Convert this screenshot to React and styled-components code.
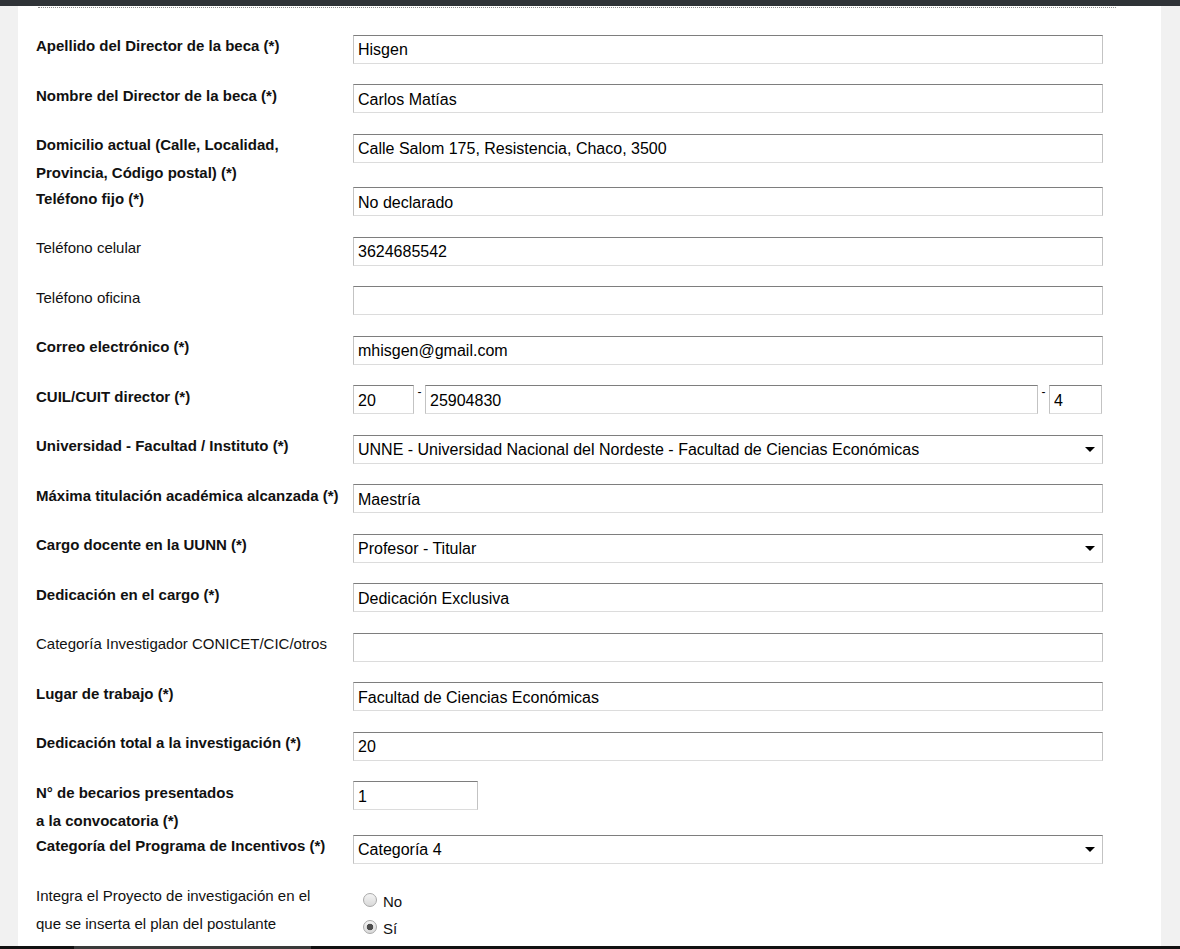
import styled, { createGlobalStyle } from "styled-components";

const GlobalStyle = createGlobalStyle`
  html, body {
    margin: 0;
    padding: 0;
    height: 100%;
  }
  body {
    background: #f1f1f1;
    font-family: "Liberation Sans", Arial, sans-serif;
    color: #111;
    overflow: hidden;
  }
  #root {
    height: 100%;
  }
`;

const Page = styled.div`
  display: flex;
  flex-direction: column;
  height: 949px;
`;

const TopBar = styled.div`
  height: 6px;
  flex-shrink: 0;
  background: #2f3337;
`;

const Main = styled.div`
  flex: 1;
  min-height: 0;
  display: flex;
  padding: 0 19px 0 18px;
`;

const Panel = styled.div`
  flex: 1;
  background: #fff;
  padding: 1px 0 0 18px;
  overflow: hidden;
`;

const Divider = styled.div`
  border-top: 1px dotted #8c8c8c;
  margin: 0 45px 0 2px;
`;

const Form = styled.div`
  margin-top: 24px;
`;

const Row = styled.div`
  display: flex;
  align-items: flex-start;
`;

const Label = styled.div`
  width: 317px;
  flex-shrink: 0;
  font-size: 15px;
  line-height: 28px;
  font-weight: ${(p) => (p.$bold ? 700 : 400)};
  color: #111;
  white-space: nowrap;
  margin-bottom: -2.5px;
`;

const Field = styled.div`
  width: 750px;
  display: flex;
  align-items: flex-start;
  padding: 2.5px 0 18px;
`;

const TextInput = styled.input`
  box-sizing: border-box;
  width: ${(p) => p.$width || 750}px;
  height: 29px;
  margin: 0;
  padding: 2px 4px 0;
  border: 1px solid #c3c3c3;
  border-top-color: #7e7e7e;
  border-bottom-color: #dcdcdc;
  border-radius: 0;
  background: #fff;
  font-family: "Liberation Sans", Arial, sans-serif;
  font-size: 16px;
  color: #000;
  outline: none;
`;

const Dash = styled.span`
  width: 11px;
  text-align: center;
  font-size: 12px;
  line-height: 14px;
  color: #000;
`;

const SelectBox = styled.div`
  box-sizing: border-box;
  width: 750px;
  height: 29px;
  display: flex;
  align-items: center;
  justify-content: space-between;
  padding: 2px 7px 0 4px;
  border: 1px solid #c3c3c3;
  border-top-color: #7e7e7e;
  border-bottom-color: #dcdcdc;
  background: #fff;
  font-size: 16px;
  color: #000;
`;

const Arrow = styled.span`
  width: 0;
  height: 0;
  margin-top: -2px;
  border-left: 5px solid transparent;
  border-right: 5px solid transparent;
  border-top: 5px solid #000;
`;

const RadioGroup = styled.div`
  display: flex;
  flex-direction: column;
  margin-top: 2.5px;
`;

const RadioItem = styled.label`
  display: flex;
  align-items: center;
  height: 27px;
  font-size: 15px;
  color: #111;
`;

const RadioCircle = styled.span`
  box-sizing: border-box;
  width: 14px;
  height: 14px;
  margin: 0 6px 0 10px;
  border-radius: 50%;
  border: 1px solid #a9a9a9;
  background: ${(p) =>
    p.$checked
      ? "radial-gradient(circle, #4d4d4d 0 3px, transparent 3.6px), linear-gradient(#f4f4f4, #d9d9d9)"
      : "linear-gradient(#f4f4f4, #d9d9d9)"};
`;

const RadioText = styled.span`
  margin-top: 3px;
`;

const BottomBar = styled.div`
  height: 3px;
  flex-shrink: 0;
  display: flex;
  padding-left: 74px;
  background: #111;
`;

const Thumb = styled.div`
  width: 237px;
  background: #3a3a3a;
`;

const rows = [
  { label: ["Apellido del Director de la beca (*)"], bold: true, value: "Hisgen" },
  { label: ["Nombre del Director de la beca (*)"], bold: true, value: "Carlos Matías" },
  {
    label: ["Domicilio actual (Calle, Localidad,", "Provincia, Código postal) (*)"],
    bold: true,
    value: "Calle Salom 175, Resistencia, Chaco, 3500",
  },
  { label: ["Teléfono fijo (*)"], bold: true, value: "No declarado" },
  { label: ["Teléfono celular"], value: "3624685542" },
  { label: ["Teléfono oficina"], value: "" },
  { label: ["Correo electrónico (*)"], bold: true, value: "mhisgen@gmail.com" },
  { label: ["CUIL/CUIT director (*)"], bold: true, type: "cuil", parts: ["20", "25904830", "4"] },
  {
    label: ["Universidad - Facultad / Instituto (*)"],
    bold: true,
    type: "select",
    value: "UNNE - Universidad Nacional del Nordeste - Facultad de Ciencias Económicas",
  },
  { label: ["Máxima titulación académica alcanzada (*)"], bold: true, value: "Maestría" },
  { label: ["Cargo docente en la UUNN (*)"], bold: true, type: "select", value: "Profesor - Titular" },
  { label: ["Dedicación en el cargo (*)"], bold: true, value: "Dedicación Exclusiva" },
  { label: ["Categoría Investigador CONICET/CIC/otros"], value: "" },
  { label: ["Lugar de trabajo (*)"], bold: true, value: "Facultad de Ciencias Económicas" },
  { label: ["Dedicación total a la investigación (*)"], bold: true, value: "20" },
  {
    label: ["N° de becarios presentados", "a la convocatoria (*)"],
    bold: true,
    value: "1",
    width: 125,
  },
  { label: ["Categoría del Programa de Incentivos (*)"], bold: true, type: "select", value: "Categoría 4" },
  {
    label: ["Integra el Proyecto de investigación en el", "que se inserta el plan del postulante"],
    type: "radio",
    options: ["No", "Sí"],
    checked: "Sí",
  },
];

function FieldContent({ row }) {
  if (row.type === "cuil") {
    return (
      <>
        <TextInput $width={61} defaultValue={row.parts[0]} />
        <Dash>-</Dash>
        <TextInput $width={613} defaultValue={row.parts[1]} />
        <Dash>-</Dash>
        <TextInput $width={53} defaultValue={row.parts[2]} />
      </>
    );
  }
  if (row.type === "select") {
    return (
      <SelectBox>
        <span>{row.value}</span>
        <Arrow />
      </SelectBox>
    );
  }
  if (row.type === "radio") {
    return (
      <RadioGroup>
        {row.options.map((opt) => (
          <RadioItem key={opt}>
            <RadioCircle $checked={opt === row.checked} />
            <RadioText>{opt}</RadioText>
          </RadioItem>
        ))}
      </RadioGroup>
    );
  }
  return <TextInput $width={row.width} defaultValue={row.value} />;
}

export default function App() {
  return (
    <>
      <GlobalStyle />
      <Page>
        <TopBar />
        <Main>
          <Panel>
            <Divider />
            <Form>
              {rows.map((row, i) => (
                <Row key={i}>
                  <Label $bold={row.bold}>
                    {row.label.map((line, j) => (
                      <span key={j}>
                        {j > 0 && <br />}
                        {line}
                      </span>
                    ))}
                  </Label>
                  <Field>
                    <FieldContent row={row} />
                  </Field>
                </Row>
              ))}
            </Form>
          </Panel>
        </Main>
        <BottomBar>
          <Thumb />
        </BottomBar>
      </Page>
    </>
  );
}
